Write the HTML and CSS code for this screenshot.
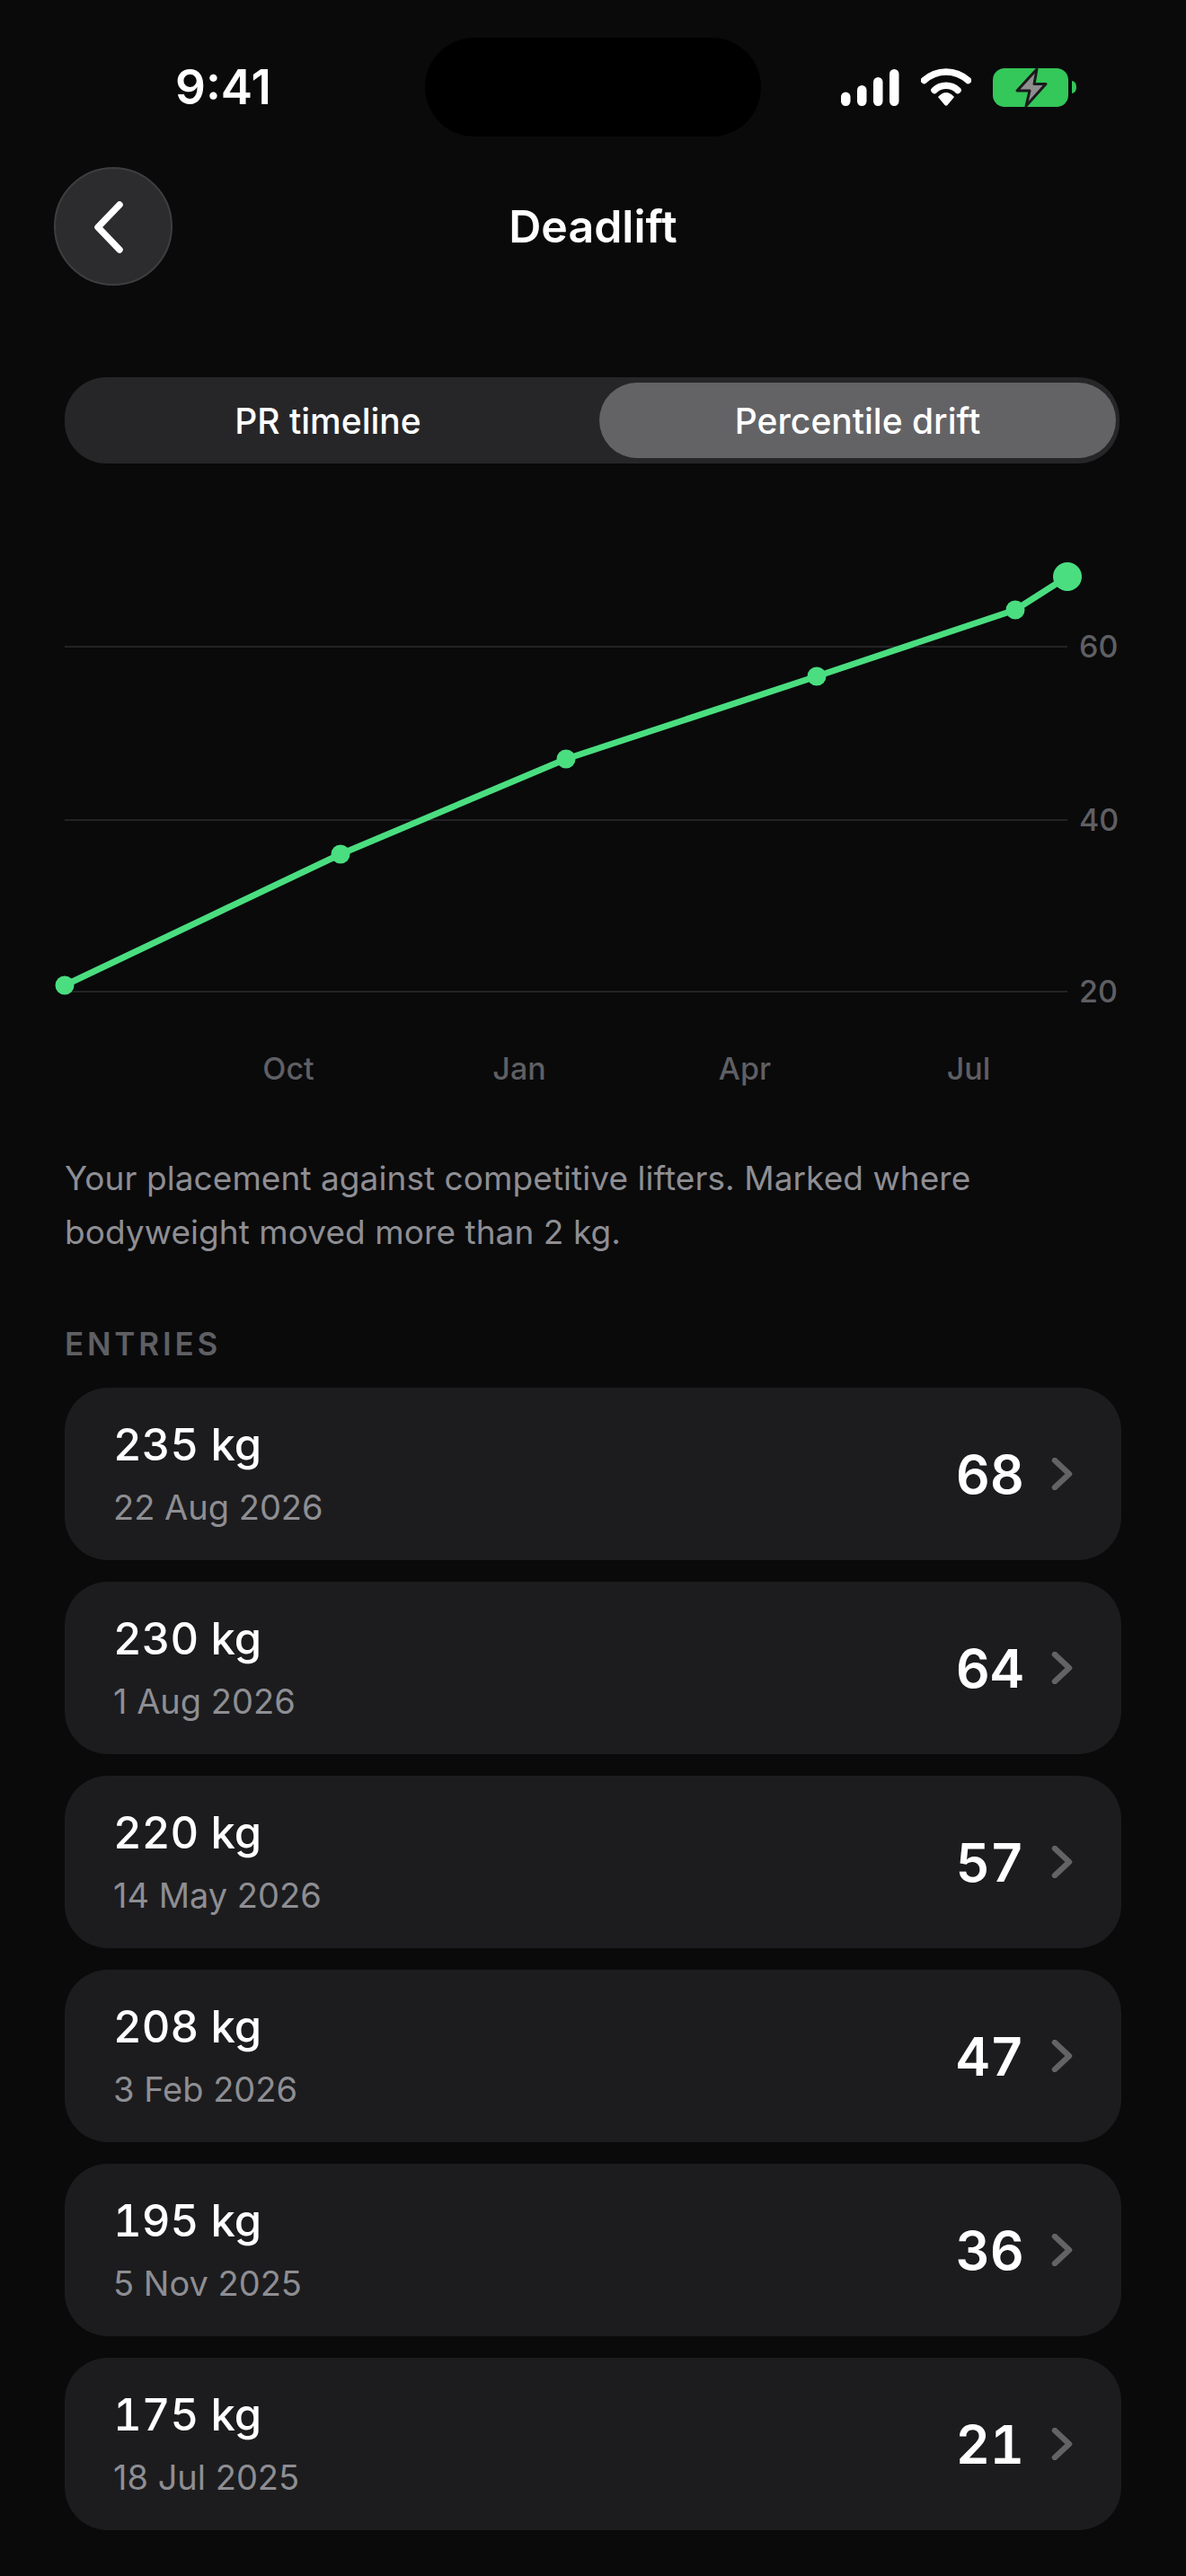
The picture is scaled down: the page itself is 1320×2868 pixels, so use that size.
FILE: index.html
```html
<!DOCTYPE html>
<html lang="en">
<head>
    <meta charset="UTF-8">
    <meta name="viewport" content="width=device-width, initial-scale=1.0">
    <title>Deadlift</title>
    <link rel="stylesheet" href="styles.css">
</head>
<body>
    <div class="screen">
        <div class="status-bar">
            <span class="time">9:41</span>
            <div class="island"></div>
            <div class="status-icons">
                <svg class="signal" width="65" height="41" viewBox="0 0 65 41">
                    <rect x="0" y="25.5" width="10.5" height="15.5" rx="5.2" />
                    <rect x="18" y="18" width="10.5" height="23" rx="5.2" />
                    <rect x="36" y="9" width="10.5" height="32" rx="5.2" />
                    <rect x="54" y="0" width="10.5" height="41" rx="5.2" />
                </svg>
                <svg class="wifi" width="56" height="42" viewBox="0 0 56 42">
                    <path d="M3.5 13.5 A36 36 0 0 1 52.5 13.5" />
                    <path d="M15 24.5 A19 19 0 0 1 41 24.5" />
                    <path class="wifi-dot" d="M19 32 Q28 22 37 32 L29.500 41 Q28 42.500 26.500 41 Z" />
                </svg>
                <svg class="battery" width="93" height="44" viewBox="0 0 93 44">
                    <rect x="0" y="1" width="84" height="43" rx="13" fill="#34c759" />
                    <path d="M88 15 Q93 16 93 22 Q93 28 88 29 Z" fill="#34c759" />
                    <path d="M49 2 L27 26 L41 26 L37 43 L59 18.500 L46 18.500 Z" fill="#8e8e8e" stroke="#1b1b1b" stroke-width="3" stroke-linejoin="round" />
                </svg>
            </div>
        </div>

        <div class="nav">
            <button class="back-button">
                <svg width="40" height="60" viewBox="0 0 40 60">
                    <path d="M31 6 L7 31 L31 56" />
                </svg>
            </button>
            <h1 class="nav-title">Deadlift</h1>
        </div>

        <div class="segmented">
            <div class="segment segment-plain">PR timeline</div>
            <div class="segment segment-active">Percentile drift</div>
        </div>

        <!-- Chart coordinates are px from the top-left of the svg -->
        <svg class="chart" width="1248" height="620" viewBox="0 0 1248 620">
            <line class="grid-line" x1="72" y1="130" x2="1188" y2="130" />
            <line class="grid-line" x1="72" y1="323" x2="1188" y2="323" />
            <line class="grid-line" x1="72" y1="514" x2="1188" y2="514" />
            <text class="axis-label" x="1201" y="142">60</text>
            <text class="axis-label" x="1201" y="335">40</text>
            <text class="axis-label" x="1201" y="526">20</text>
            <polyline class="drift-line" points="72,507 379,361 630,255 909,163 1130,89 1188,52" />
            <circle class="point" cx="72" cy="507" r="10.5" />
            <circle class="point" cx="379" cy="361" r="10.5" />
            <circle class="point" cx="630" cy="255" r="10.5" />
            <circle class="point" cx="909" cy="163" r="10.5" />
            <circle class="point" cx="1130" cy="89" r="10.5" />
            <circle class="point" cx="1188" cy="52" r="16" />
            <text class="month-label" x="321" y="612">Oct</text>
            <text class="month-label" x="578" y="612">Jan</text>
            <text class="month-label" x="829" y="612">Apr</text>
            <text class="month-label" x="1078" y="612">Jul</text>
        </svg>

        <p class="note">Your placement against competitive lifters. Marked where bodyweight moved more than 2 kg.</p>

        <h2 class="section-title">ENTRIES</h2>

        <div class="entries">
            <div class="entry">
                <div class="entry-info">
                    <div class="entry-weight">235 kg</div>
                    <div class="entry-date">22 Aug 2026</div>
                </div>
                <div class="entry-score">68</div>
                <svg class="chevron" width="24" height="36" viewBox="0 0 24 36"><path d="M4 3 L20 18 L4 33" /></svg>
            </div>
            <div class="entry">
                <div class="entry-info">
                    <div class="entry-weight">230 kg</div>
                    <div class="entry-date">1 Aug 2026</div>
                </div>
                <div class="entry-score">64</div>
                <svg class="chevron" width="24" height="36" viewBox="0 0 24 36"><path d="M4 3 L20 18 L4 33" /></svg>
            </div>
            <div class="entry">
                <div class="entry-info">
                    <div class="entry-weight">220 kg</div>
                    <div class="entry-date">14 May 2026</div>
                </div>
                <div class="entry-score">57</div>
                <svg class="chevron" width="24" height="36" viewBox="0 0 24 36"><path d="M4 3 L20 18 L4 33" /></svg>
            </div>
            <div class="entry">
                <div class="entry-info">
                    <div class="entry-weight">208 kg</div>
                    <div class="entry-date">3 Feb 2026</div>
                </div>
                <div class="entry-score">47</div>
                <svg class="chevron" width="24" height="36" viewBox="0 0 24 36"><path d="M4 3 L20 18 L4 33" /></svg>
            </div>
            <div class="entry">
                <div class="entry-info">
                    <div class="entry-weight">195 kg</div>
                    <div class="entry-date">5 Nov 2025</div>
                </div>
                <div class="entry-score">36</div>
                <svg class="chevron" width="24" height="36" viewBox="0 0 24 36"><path d="M4 3 L20 18 L4 33" /></svg>
            </div>
            <div class="entry">
                <div class="entry-info">
                    <div class="entry-weight">175 kg</div>
                    <div class="entry-date">18 Jul 2025</div>
                </div>
                <div class="entry-score">21</div>
                <svg class="chevron" width="24" height="36" viewBox="0 0 24 36"><path d="M4 3 L20 18 L4 33" /></svg>
            </div>
        </div>
    </div>
</body>
</html>
```

FILE: styles.css
```css
* {
    box-sizing: border-box;
}

body {
    margin: 0;
    background: #0a0a0b;
    font-family: Inter, "Liberation Sans", sans-serif;
    color: #fff;
}

.screen {
    position: relative;
    width: 1320px;
    height: 2868px;
    overflow: hidden;
}

/* Status bar */
.status-bar {
    display: flex;
    justify-content: space-between;
    align-items: center;
    height: 186px;
    padding: 8px 122px 0 195px;
}

.time {
    font-size: 53px;
    font-weight: 600;
    line-height: 1;
}

.island {
    position: absolute;
    top: 42px;
    left: 473px;
    width: 374px;
    height: 110px;
    border-radius: 55px;
    background: #000;
}

.status-icons {
    display: flex;
    align-items: center;
    gap: 24px;
}

.signal {
    fill: #fff;
}

.wifi path {
    fill: none;
    stroke: #fff;
    stroke-width: 7.5;
    stroke-linecap: round;
}

.wifi .wifi-dot {
    fill: #fff;
    stroke: none;
}

/* Nav */
.nav {
    display: grid;
    grid-template-columns: 132px 1fr 132px;
    align-items: center;
    height: 132px;
    padding: 0 60px;
}

.back-button {
    display: flex;
    align-items: center;
    justify-content: center;
    width: 132px;
    height: 132px;
    padding: 0;
    border: 2px solid #3e3e40;
    border-radius: 50%;
    background: #2c2c2e;
}

.back-button svg {
    margin-right: 8px;
}

.back-button path {
    fill: none;
    stroke: #fff;
    stroke-width: 7.5;
    stroke-linecap: round;
    stroke-linejoin: round;
}

.nav-title {
    margin: 0;
    font-size: 50px;
    font-weight: 600;
    line-height: 1;
    text-align: center;
}

/* Segmented control */
.segmented {
    display: grid;
    grid-template-columns: 1fr 575px;
    height: 96px;
    margin: 102px 74px 0 72px;
    padding: 6px 4px 6px 0;
    border-radius: 46px;
    background: #262628;
}

.segment {
    display: flex;
    align-items: center;
    justify-content: center;
    border-radius: 42px;
    font-size: 39px;
    font-weight: 500;
}

.segment-plain {
    padding-right: 9px;
}

.segment-active {
    background: #636366;
}

/* Chart */
.chart {
    display: block;
    margin-top: 74px;
}

.grid-line {
    stroke: #232325;
    stroke-width: 2;
}

.axis-label,
.month-label {
    fill: #5f5f63;
    font-size: 34px;
    font-weight: 500;
}

.month-label {
    text-anchor: middle;
}

.drift-line {
    fill: none;
    stroke: #4ade80;
    stroke-width: 7;
    stroke-linejoin: round;
}

.point {
    fill: #4ade80;
}

/* Note and list */
.note {
    width: 1120px;
    margin: 72px 0 0 72px;
    font-size: 37px;
    line-height: 60px;
    letter-spacing: 0.06px;
    color: #8e8e93;
}

.section-title {
    margin: 74px 0 0 72px;
    font-size: 35px;
    font-weight: 600;
    line-height: 40px;
    letter-spacing: 3.8px;
    color: #5f5f63;
}

.entries {
    display: flex;
    flex-direction: column;
    gap: 24px;
    margin: 29px 72px 0;
}

.entry {
    display: flex;
    align-items: center;
    height: 192px;
    padding: 0 54px;
    border-radius: 48px;
    background: #1c1c1e;
}

.entry-info {
    flex: 1;
}

.entry-weight {
    font-size: 49px;
    font-weight: 500;
    line-height: 60px;
    font-variant-numeric: tabular-nums;
}

.entry-date {
    margin-top: 14px;
    font-size: 38px;
    line-height: 50px;
    color: #8e8e93;
}

.entry-score {
    margin-right: 30px;
    font-size: 59px;
    font-weight: 600;
    font-variant-numeric: tabular-nums;
}

.chevron path {
    fill: none;
    stroke: #636366;
    stroke-width: 6.5;
    stroke-linecap: round;
    stroke-linejoin: round;
}
```
